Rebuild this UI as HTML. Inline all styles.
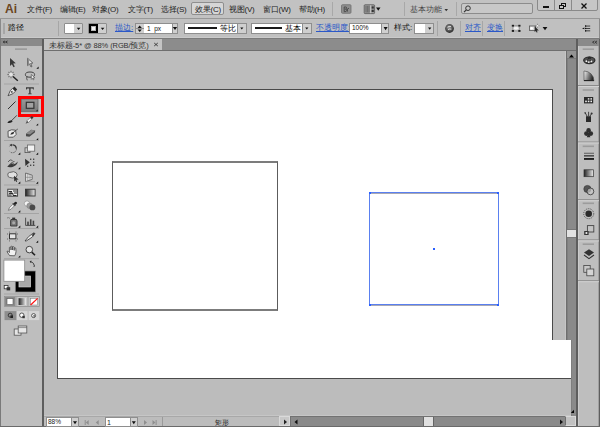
<!DOCTYPE html>
<html><head><meta charset="utf-8">
<style>
*{margin:0;padding:0;box-sizing:border-box}
html,body{width:600px;height:427px;overflow:hidden;background:#bcbcbc;font-family:"Liberation Sans",sans-serif;font-size:8px;color:#222}
.a{position:absolute}
.t{position:absolute;white-space:nowrap;line-height:1}
</style></head><body>
<!-- menu bar -->
<div class="a" style="left:0;top:0;width:600px;height:18px;background:#c2c2c2"></div>
<div class="a" style="left:0;top:18px;width:600px;height:1px;background:#989898"></div>
<!-- control bar -->
<div class="a" style="left:0;top:19px;width:600px;height:19px;background:#c0c0c0"></div>
<div class="a" style="left:0;top:37px;width:600px;height:1px;background:#cacaca"></div>
<div class="a" style="left:0;top:38px;width:600px;height:1px;background:#7a7a7a"></div>
<!-- MENU -->
<div class="t" style="left:5px;top:3px;font-size:12px;font-weight:bold;color:#6a4522">Ai</div>
<div class="t" style="left:27px;top:6px;letter-spacing:-0.25px">文件(F)</div>
<div class="t" style="left:60px;top:6px;letter-spacing:-0.25px">编辑(E)</div>
<div class="t" style="left:92px;top:6px;letter-spacing:-0.25px">对象(O)</div>
<div class="t" style="left:128px;top:6px;letter-spacing:-0.25px">文字(T)</div>
<div class="t" style="left:161px;top:6px;letter-spacing:-0.25px">选择(S)</div>
<div class="a" style="left:191px;top:2px;width:33px;height:13px;background:#d6d6d6;border:1px solid #8e8e8e;border-radius:2px"></div>
<div class="t" style="left:195px;top:6px;letter-spacing:-0.25px">效果(C)</div>
<div class="t" style="left:229px;top:6px;letter-spacing:-0.25px">视图(V)</div>
<div class="t" style="left:263px;top:6px;letter-spacing:-0.25px">窗口(W)</div>
<div class="t" style="left:299px;top:6px;letter-spacing:-0.25px">帮助(H)</div>
<div class="a" style="left:332px;top:2px;width:1px;height:14px;background:#a8a8a8"></div>
<svg class="a" style="left:336px;top:0" width="46" height="18" viewBox="336 0 46 18">
<rect x="341.5" y="4.7" width="9.5" height="8.6" rx="1" fill="#8e8e8e" stroke="#6e6e6e" stroke-width="0.8"/>
<path d="M344.2 11.6 V7 H345.6 Q346.8 7 346.6 8.2 Q346.4 9 345.4 9.1 Q346.8 9.3 346.7 10.5 Q346.5 11.6 345.2 11.6 Z M347.4 11.6 V9 Q348 8.3 349 8.4" fill="none" stroke="#4a4a4a" stroke-width="1"/>
<rect x="364.2" y="4.8" width="10.4" height="8.8" rx="0.8" fill="#9a9a9a" stroke="#555" stroke-width="0.8"/>
<rect x="365.4" y="6" width="4.2" height="6.4" fill="#6e6e6e"/>
<path d="M366.4 6V12.4M368.4 6V12.4" stroke="#8a8a8a" stroke-width="0.6"/>
<rect x="370.4" y="5.2" width="0.8" height="8" fill="#dadada"/>
<rect x="371.6" y="6.4" width="2.2" height="2.2" fill="#333"/>
<rect x="371.6" y="9.8" width="2.2" height="2.2" fill="#333"/>
</svg>
<svg class="a" style="left:0;top:0;overflow:visible" width="1" height="1"><path d="M376 7.5H380.5L378.25 10.8Z" fill="#111"/></svg>
<div class="a" style="left:404px;top:2px;width:1px;height:14px;background:#a8a8a8"></div>
<div class="t" style="left:410px;top:6px;color:#444">基本功能</div>
<svg class="a" style="left:0;top:0;overflow:visible" width="1" height="1"><path d="M444.5 9H448L446.25 11.2Z" fill="#333"/></svg>
<div class="a" style="left:456px;top:2px;width:1px;height:14px;background:#a8a8a8"></div>
<div class="a" style="left:461px;top:3px;width:72px;height:11px;background:#c8c8c8;border:1px solid #8c8c8c;border-radius:2px"></div>
<svg class="a" style="left:463px;top:5px" width="8" height="8"><circle cx="5" cy="3.2" r="2.3" fill="none" stroke="#333" stroke-width="1"/><line x1="3.3" y1="4.8" x2="1" y2="7.2" stroke="#333" stroke-width="1.2"/></svg>
<div class="a" style="left:537px;top:-2px;width:61px;height:13px;background:#c6c6c6;border:1px solid #8a8a8a;border-radius:2px"></div>
<div class="a" style="left:554px;top:0;width:1px;height:11px;background:#8a8a8a"></div>
<div class="a" style="left:571px;top:0;width:1px;height:11px;background:#8a8a8a"></div>
<div class="a" style="left:543px;top:6px;width:6px;height:2px;background:#111"></div>
<div class="a" style="left:561px;top:3px;width:5px;height:4px;border:1px solid #111"></div>
<div class="a" style="left:559px;top:5px;width:5px;height:4px;border:1px solid #111;background:#c6c6c6"></div>
<svg class="a" style="left:580px;top:2px" width="8" height="8"><path d="M1.5 1.5L6.5 6.5M6.5 1.5L1.5 6.5" stroke="#111" stroke-width="1.3"/></svg>
<!-- CONTROL -->
<div class="a" style="left:0;top:19px;width:1px;height:19px;background:#8a8a8a"></div>
<div class="a" style="left:3px;top:23px;width:2px;height:11px;background:#a6a6a6"></div>
<div class="t" style="left:8px;top:24px;font-size:7.5px;color:#111">路径</div>
<div class="a" style="left:58px;top:21px;width:1px;height:15px;background:#a6a6a6"></div>
<div class="a" style="left:64px;top:23px;width:19px;height:11px;background:#cfcfcf;border:1px solid #8e8e8e;border-radius:1px"></div>
<div class="a" style="left:65px;top:24px;width:9px;height:9px;background:#fff"></div>
<svg class="a" style="left:0;top:0;overflow:visible" width="1" height="1"><path d="M76.8 27.8H80.4L78.6 29.9Z" fill="#111"/></svg>
<div class="a" style="left:88px;top:23px;width:19px;height:11px;background:#cfcfcf;border:1px solid #8e8e8e;border-radius:1px"></div>
<div class="a" style="left:89px;top:24px;width:9px;height:9px;background:#b4b4b4;border:2px solid #000"></div>
<div class="a" style="left:92px;top:27px;width:3px;height:3px;background:#f4f4f4"></div>
<svg class="a" style="left:0;top:0;overflow:visible" width="1" height="1"><path d="M100.8 27.8H104.4L102.6 29.9Z" fill="#111"/></svg>
<div class="t" style="left:115px;top:24px;color:#2a58c8;text-decoration:underline">描边:</div>
<div class="a" style="left:135px;top:23px;width:43px;height:11px;background:#fff;border:1px solid #8e8e8e"></div>
<div class="a" style="left:136px;top:24px;width:8px;height:9px;background:#cfcfcf"></div>
<div class="a" style="left:136px;top:28px;width:8px;height:1px;background:#8e8e8e"></div>
<svg class="a" style="left:0;top:0;overflow:visible" width="1" height="1"><path d="M137.6 27.9H141.8L139.7 25.6Z" fill="#111"/></svg>
<svg class="a" style="left:0;top:0;overflow:visible" width="1" height="1"><path d="M137.6 29.6H141.8L139.7 31.9Z" fill="#111"/></svg>
<div class="t" style="left:147px;top:25.5px;font-size:6.5px;color:#111">1&nbsp;&nbsp;px</div>
<div class="a" style="left:172px;top:24px;width:5px;height:9px;background:#cfcfcf;border-left:1px solid #8e8e8e"></div>
<svg class="a" style="left:0;top:0;overflow:visible" width="1" height="1"><path d="M172.8 27H177.2L175.0 30Z" fill="#111"/></svg>
<div class="a" style="left:184px;top:23px;width:63px;height:11px;background:#fff;border:1px solid #8e8e8e"></div>
<div class="a" style="left:188px;top:27px;width:29px;height:2px;background:#1a1a1a"></div>
<div class="t" style="left:220px;top:24.5px;font-size:7.5px;color:#000">等比</div>
<div class="a" style="left:237px;top:24px;width:9px;height:9px;background:#cfcfcf;border-left:1px solid #8e8e8e"></div>
<svg class="a" style="left:0;top:0;overflow:visible" width="1" height="1"><path d="M240.2 27.6H243.4L241.8 29.6Z" fill="#111"/></svg>
<div class="a" style="left:251px;top:23px;width:61px;height:11px;background:#fff;border:1px solid #8e8e8e"></div>
<div class="a" style="left:255px;top:27px;width:27px;height:2px;background:#1a1a1a"></div>
<div class="t" style="left:285px;top:24.5px;font-size:7.5px;color:#000">基本</div>
<div class="a" style="left:302px;top:24px;width:9px;height:9px;background:#cfcfcf;border-left:1px solid #8e8e8e"></div>
<svg class="a" style="left:0;top:0;overflow:visible" width="1" height="1"><path d="M305.2 27.6H308.4L306.79999999999995 29.6Z" fill="#111"/></svg>
<div class="t" style="left:316px;top:24px;color:#2a58c8;text-decoration:underline">不透明度:</div>
<div class="a" style="left:349px;top:23px;width:40px;height:11px;background:#fff;border:1px solid #8e8e8e"></div>
<div class="t" style="left:352px;top:25px;font-size:6.5px;color:#111">100%</div>
<div class="a" style="left:381px;top:24px;width:7px;height:9px;background:#cfcfcf;border-left:1px solid #8e8e8e"></div>
<svg class="a" style="left:0;top:0;overflow:visible" width="1" height="1"><path d="M383.6 27H387.6L385.6 30.3Z" fill="#111"/></svg>
<div class="t" style="left:394px;top:24px;color:#111">样式:</div>
<div class="a" style="left:414px;top:23px;width:20px;height:11px;background:#cfcfcf;border:1px solid #8e8e8e"></div>
<div class="a" style="left:415px;top:24px;width:10px;height:9px;background:#fff"></div>
<svg class="a" style="left:0;top:0;overflow:visible" width="1" height="1"><path d="M428 27.6H431.4L429.7 29.8Z" fill="#111"/></svg>
<div class="a" style="left:437px;top:21px;width:1px;height:15px;background:#a6a6a6"></div>
<svg class="a" style="left:445px;top:24px" width="9" height="9"><defs><radialGradient id="glb" cx="0.45" cy="0.4" r="0.6"><stop offset="0" stop-color="#9a9a9a"/><stop offset="1" stop-color="#2a2a2a"/></radialGradient></defs><circle cx="4.5" cy="4.5" r="4.4" fill="url(#glb)"/><path d="M2.5 3.2 Q4 2 6 2.6 M3 5.6 Q4.6 4.6 6.4 5.2" stroke="#e6e6e6" stroke-width="0.9" fill="none"/></svg>
<div class="a" style="left:460px;top:21px;width:1px;height:15px;background:#a6a6a6"></div>
<div class="t" style="left:465px;top:24px;color:#2a58c8;text-decoration:underline">对齐</div>
<div class="a" style="left:482px;top:21px;width:1px;height:15px;background:#a6a6a6"></div>
<div class="t" style="left:487px;top:24px;color:#2a58c8;text-decoration:underline">变换</div>
<div class="a" style="left:504px;top:21px;width:1px;height:15px;background:#a6a6a6"></div>
<svg class="a" style="left:505px;top:19px" width="40" height="18" viewBox="505 19 40 18">
<path d="M512.8 25.6H519.4M512.8 31H519.4M512.8 25.6V31M519.4 25.6V31" stroke="#8a8a8a" stroke-width="0.7"/>
<ellipse cx="516.1" cy="28.3" rx="2.6" ry="1.4" fill="#f2f2f2"/>
<g fill="#1e1e1e"><rect x="511.8" y="24.8" width="2.2" height="1.8"/><rect x="518.3" y="24.8" width="2.2" height="1.8"/><rect x="511.8" y="30" width="2.2" height="1.9"/><rect x="518.3" y="30" width="2.2" height="1.9"/></g>
<rect x="529.4" y="26" width="6" height="4.4" fill="#dcdcdc" stroke="#555" stroke-width="0.8"/>
<circle cx="531.6" cy="28.2" r="1.2" fill="#fff"/>
<path d="M534.6 26.2 L538.8 30.4 L536.8 30.5 L537.6 32.2 L536.6 32.6 L535.8 30.9 L534.6 32 Z" fill="#2a2a2a"/>
<path d="M537.5 23.8V27.6M535.6 25.7H539.4" stroke="#666" stroke-width="0.8"/>
<circle cx="537.5" cy="25.7" r="1" fill="#f4f4f4"/>
</svg>
<svg class="a" style="left:0;top:0;overflow:visible" width="1" height="1"><path d="M542.6 27H547.4L545.0 30.3Z" fill="#111"/></svg>
<svg class="a" style="left:580px;top:24px" width="12" height="9" viewBox="580 24 12 9"><path d="M584.4 27.6 L582 28.4 L584.4 29.2Z" fill="#111"/><g fill="#333"><rect x="585" y="25.6" width="5.2" height="0.9"/><rect x="585" y="28" width="5.2" height="0.9"/><rect x="585" y="30.4" width="5.2" height="0.9"/></g><g fill="#111"><rect x="585" y="25.4" width="1.2" height="1.3"/><rect x="585" y="27.8" width="1.2" height="1.3"/><rect x="585" y="30.2" width="1.2" height="1.3"/></g></svg>
<div class="a" style="left:599px;top:19px;width:1px;height:19px;background:#8a8a8a"></div>
<!-- left panel -->
<div class="a" style="left:0;top:39px;width:42px;height:388px;background:#bebebe"></div>
<div class="a" style="left:0;top:39px;width:42px;height:7px;background:#8a8a8a"></div>
<div class="a" style="left:0;top:39px;width:1px;height:388px;background:#7a7a7a"></div>
<div class="a" style="left:42px;top:39px;width:2px;height:388px;background:#5e5e5e"></div>
<svg class="a" style="left:0;top:0" width="44" height="427" viewBox="0 0 44 427">
<defs>
<linearGradient id="gH" x1="0" x2="1" y1="0" y2="0"><stop offset="0" stop-color="#222"/><stop offset="1" stop-color="#eee"/></linearGradient>
<linearGradient id="gV" x1="0" x2="0" y1="0" y2="1"><stop offset="0" stop-color="#999"/><stop offset="1" stop-color="#7a7a7a"/></linearGradient>
</defs>
<!-- header << -->
<path d="M5 41 L3 42 L5 43 M7.5 41 L5.5 42 L7.5 43" stroke="#333" stroke-width="0.9" fill="none"/>
<!-- grip -->
<rect x="15" y="48.3" width="12" height="1.7" fill="#9c9c9c"/>
<!-- selection -->
<path d="M10 58 L15.8 63.3 L13.2 63.6 L14.8 66.6 L13.5 67.2 L11.9 64.2 L10 66 Z" fill="#3a3a3a"/>
<!-- direct selection -->
<path d="M27.6 58.3 L32.8 63 L30.6 63.3 L32 66.4 L31 67 L29.6 63.9 L27.6 65.6 Z" fill="#eee" stroke="#4a4a4a" stroke-width="0.8"/><path d="M28 59.3 L29.2 60.4 L29.2 64.2 L28 65 Z" fill="#8a8a8a"/>
<path d="M38.6 66.6 L38.6 68.8 L36.4 68.8 Z" fill="#111"/>
<!-- magic wand -->
<g stroke="#7a7a7a" stroke-width="1.2"><line x1="11" y1="70.8" x2="11" y2="78.2"/><line x1="7.3" y1="74.5" x2="14.7" y2="74.5"/><line x1="8.4" y1="71.9" x2="13.6" y2="77.1"/><line x1="13.6" y1="71.9" x2="8.4" y2="77.1"/></g>
<circle cx="11" cy="74.5" r="2" fill="#e4e4e4"/>
<line x1="13" y1="76.5" x2="17.8" y2="80.8" stroke="#222" stroke-width="1.5"/>
<!-- lasso -->
<ellipse cx="30" cy="74.6" rx="4.6" ry="2.6" fill="none" stroke="#444" stroke-width="1"/>
<path d="M27 76.5 Q26.2 78.5 27.3 80.3" fill="none" stroke="#444" stroke-width="0.9"/>
<path d="M31.3 74.5 L35 77.8 L33.2 77.9 L34 79.5 L33.2 79.9 L32.4 78.3 L31.3 79.4 Z" fill="#eee" stroke="#444" stroke-width="0.6"/>
<!-- sep -->
<rect x="4" y="83.5" width="35" height="1" fill="#a4a4a4"/>
<!-- pen -->
<g transform="rotate(45 11.9 91.9)">
<rect x="9.9" y="86.4" width="4" height="2.6" fill="#2a2a2a"/>
<path d="M9.9 89 L13.9 89 L14 92 L11.9 97.4 L9.8 92 Z" fill="#e8e8e8" stroke="#444" stroke-width="0.8"/>
<circle cx="11.9" cy="92" r="0.9" fill="#444"/>
</g>
<!-- type -->
<path d="M26 87.3 H33.8 V89.6 H33.1 L32.6 88.6 H30.6 V93.4 L31.7 93.6 V94.3 H28.1 V93.6 L29.2 93.4 V88.6 H27.2 L26.7 89.6 H26 Z" fill="#3a3a3a"/>
<!-- line -->
<line x1="8" y1="109" x2="15.5" y2="101.5" stroke="#333" stroke-width="1"/>
<!-- rect button -->
<rect x="21.5" y="99.2" width="16.5" height="12.5" fill="url(#gV)" stroke="#6a6a6a" stroke-width="0.8"/>
<rect x="26.3" y="102.3" width="7.6" height="6" fill="#a2a2a2" stroke="#333" stroke-width="1.2"/>
<path d="M37.6 109.6 L37.6 111.3 L35.9 111.3 Z" fill="#111"/>
<rect x="19.5" y="97.5" width="23" height="18" fill="none" stroke="#ff0000" stroke-width="3"/>
<!-- brush -->
<line x1="16.9" y1="115.3" x2="11.6" y2="120.6" stroke="#444" stroke-width="1"/>
<path d="M7.3 122.8 Q8.5 120 11.8 120.2 L12.6 121.2 Q11.5 123.6 7.3 122.8 Z" fill="#222"/>
<!-- pencil -->
<g transform="rotate(45 29.1 120.2)">
<rect x="28" y="115.2" width="2.3" height="2.5" fill="#333"/>
<rect x="28" y="117.7" width="2.3" height="4.5" fill="#f0f0f0" stroke="#555" stroke-width="0.5"/>
<path d="M28 122.2 L30.3 122.2 L29.15 125.2 Z" fill="#555"/>
</g>
<path d="M38.2 123.4 L38.2 125.6 L36 125.6 Z" fill="#111"/>
<!-- blob brush -->
<path d="M8 131.2 L11.6 129.8 L15.5 130.2 L16.2 134.4 L13.4 137.2 L8.2 137.2 Z" fill="#ececec" stroke="#4a4a4a" stroke-width="0.9"/>
<path d="M10.2 134.4 Q11.6 131.6 14.2 132 Q13.8 135.2 10.2 134.4 Z" fill="#2a2a2a"/>
<line x1="13.5" y1="132.2" x2="17.8" y2="129" stroke="#444" stroke-width="0.8"/>
<!-- eraser -->
<path d="M26 133.8 L31.2 129.8 L35.2 130.6 L34.8 132.6 L29.4 136.7 L26 136.3 Z" fill="#4a4a4a"/>
<path d="M26 133.8 L31.2 129.8 L35.2 130.6 L30 134.4 Z" fill="#8a8a8a"/>
<path d="M38.2 138 L38.2 140.2 L36 140.2 Z" fill="#111"/>
<!-- sep -->
<rect x="4" y="140" width="35" height="1" fill="#a4a4a4"/>
<!-- rotate -->
<path d="M9.6 146.3 A3.9 3.9 0 1 1 9.8 151.6" fill="none" stroke="#555" stroke-width="1" stroke-dasharray="1.2 1"/>
<path d="M12.8 144.8 A3.9 3.9 0 0 1 16.2 148.6" fill="none" stroke="#333" stroke-width="1.2"/>
<path d="M9.4 145 L11.9 143.7 L11.8 146.5 Z" fill="#333"/>
<path d="M20.3 152.5 L20.3 154.7 L18.1 154.7 Z" fill="#111"/>
<!-- scale -->
<rect x="25" y="147.8" width="5" height="4.8" fill="#c8c8c8" stroke="#555" stroke-width="0.8"/>
<rect x="27.5" y="145" width="7.2" height="6.2" fill="#f2f2f2" stroke="#666" stroke-width="0.8"/>
<path d="M38.2 152.5 L38.2 154.7 L36 154.7 Z" fill="#111"/>
<!-- warp / width -->
<path d="M7.2 166.8 Q10 163 12.5 164 Q15 165 17.8 161.6 Q17 165.8 12.5 166.9 Q9.5 167.4 7.2 166.8 Z" fill="#3a3a3a"/><path d="M8.5 165.5 Q11 161.5 14 163.5" fill="none" stroke="#666" stroke-width="0.9"/>
<path d="M8 162 Q10 158.5 12.5 160.5" fill="none" stroke="#555" stroke-width="0.9"/>
<path d="M11 164 Q12.5 161 14.5 161.5" fill="none" stroke="#555" stroke-width="0.9"/>
<path d="M20.3 167 L20.3 169.2 L18.1 169.2 Z" fill="#111"/>
<!-- free transform -->
<path d="M25 158.7 L29.8 162.2 L25.4 166 Z" fill="#333"/>
<g fill="#3a3a3a"><rect x="30" y="158.6" width="1.3" height="1.3"/><rect x="33" y="158.6" width="1.3" height="1.3"/><rect x="33" y="161.6" width="1.3" height="1.3"/><rect x="33" y="164.6" width="1.3" height="1.3"/><rect x="30" y="164.6" width="1.3" height="1.3"/><rect x="27" y="165.6" width="1.3" height="1.3"/></g>
<!-- shape builder -->
<path d="M8 175.6 Q7 172.4 11 172.2 Q13.6 170.8 16.2 172.8 Q18.4 174.8 16 177.4 Q12 178.6 9.6 177.4 Q7.8 177 8 175.6 Z" fill="#e0e0e0" stroke="#555" stroke-width="0.9"/>
<path d="M14 175.8 L18.6 179.6 L16.4 179.8 L17.2 181.6 L16.2 182 L15.4 180.3 L14.2 181.5 Z" fill="#333"/>
<path d="M20.3 181.6 L20.3 183.8 L18.1 183.8 Z" fill="#111"/>
<!-- perspective -->
<path d="M25.6 173 L32.2 175.2 L32.2 179.4 L25.6 181.6 Z" fill="#e8e8e8" stroke="#555" stroke-width="0.8"/>
<path d="M27.8 173.8 V180.9 M30 174.5 V180.2 M25.6 177.3 H32.2" stroke="#777" stroke-width="0.6"/>
<line x1="25.6" y1="181.6" x2="35" y2="181.6" stroke="#999" stroke-width="0.7"/>
<path d="M38.2 181.6 L38.2 183.8 L36 183.8 Z" fill="#111"/>
<!-- sep -->
<rect x="4" y="184.5" width="35" height="1" fill="#a4a4a4"/>
<!-- mesh -->
<rect x="7.8" y="189.2" width="9.8" height="7" fill="#f0f0f0" stroke="#3a3a3a" stroke-width="0.9"/>
<path d="M8.5 191.5 H12 M13 191 H17 M9 193.5 Q12 192 13.5 194.5 M14 193 H17 M8.5 195 H11.5 M13 195.5 H16.5" stroke="#2a2a2a" stroke-width="1.1"/>
<!-- gradient -->
<rect x="25.5" y="189.2" width="9.6" height="6.8" fill="url(#gH)" stroke="#333" stroke-width="0.9"/>
<!-- eyedropper -->
<g transform="rotate(45 12.4 206.3)">
<rect x="11.2" y="200.4" width="2.4" height="3.2" rx="1" fill="#222"/>
<rect x="10.6" y="203.4" width="3.6" height="1.2" fill="#222"/>
<path d="M11.3 204.6 H13.5 V209.4 L12.4 212 L11.3 209.4 Z" fill="#f0f0f0" stroke="#555" stroke-width="0.6"/>
</g>
<path d="M20.3 210.2 L20.3 212.4 L18.1 212.4 Z" fill="#111"/>
<!-- blend -->
<circle cx="27" cy="203.6" r="2.7" fill="#f4f4f4" stroke="#888" stroke-width="0.6"/>
<circle cx="29.6" cy="205.8" r="2.8" fill="#9a9a9a" stroke="#777" stroke-width="0.5"/>
<circle cx="32.4" cy="207.4" r="2.9" fill="#4a4a4a"/>
<!-- sep -->
<rect x="4" y="213" width="35" height="1" fill="#a4a4a4"/>
<!-- symbol sprayer -->
<path d="M11 219.5 H16.4 L17 221 V226 H10.6 V221 Z" fill="#777" stroke="#333" stroke-width="0.9"/>
<rect x="12.2" y="217.6" width="3" height="1.9" fill="#333"/>
<circle cx="13.7" cy="222.8" r="1.5" fill="#aaa"/>
<path d="M7 218 Q8.5 217 10 218.4" fill="none" stroke="#777" stroke-width="0.9"/>
<path d="M20.3 225.6 L20.3 227.8 L18.1 227.8 Z" fill="#111"/>
<!-- graph -->
<path d="M25.6 217.7 V225.4 H35.3" fill="none" stroke="#444" stroke-width="0.9"/>
<rect x="27.2" y="221.6" width="1.6" height="3.8" fill="#444"/>
<rect x="29.9" y="219.3" width="1.6" height="6.1" fill="#444"/>
<rect x="32.6" y="220.7" width="1.6" height="4.7" fill="#444"/>
<path d="M38.2 225.6 L38.2 227.8 L36 227.8 Z" fill="#111"/>
<!-- sep -->
<rect x="4" y="228" width="35" height="1" fill="#a4a4a4"/>
<!-- artboard -->
<rect x="9.5" y="233.8" width="6.4" height="5" fill="#e6e6e6" stroke="#333" stroke-width="1"/>
<g fill="#666"><rect x="7" y="233.5" width="1" height="1"/><rect x="7" y="238.5" width="1" height="1"/><rect x="17" y="233.5" width="1" height="1"/><rect x="17" y="238.5" width="1" height="1"/><rect x="9" y="231.6" width="1" height="1"/><rect x="15.5" y="231.6" width="1" height="1"/><rect x="9" y="240.4" width="1" height="1"/><rect x="15.5" y="240.4" width="1" height="1"/></g>
<!-- slice -->
<path d="M35 233.4 L32.4 237 L26.5 240.8 L25 241 L28.6 236.6 L33.4 233 Z" fill="#f0f0f0" stroke="#333" stroke-width="0.8"/>
<path d="M35 233.4 L33.4 233 L31.6 235.4 L33 236 Z" fill="#333"/>
<path d="M38.2 240.6 L38.2 242.8 L36 242.8 Z" fill="#111"/>
<!-- hand -->
<path d="M9.6 255.6 L7.2 252 Q6.6 250.8 8 251.2 L9.4 252.6 L9.4 247.4 Q10.2 246.6 11 247.4 L11 250 L11 246.6 Q11.8 245.8 12.6 246.6 L12.6 250 L12.6 247 Q13.4 246.2 14.2 247 L14.2 250.4 L14.2 248.2 Q15 247.4 15.8 248.2 L16 251.6 Q15.8 254.4 14.6 255.8 Z" fill="#f2f2f2" stroke="#444" stroke-width="0.8"/>
<path d="M20.3 255.4 L20.3 257.6 L18.1 257.6 Z" fill="#111"/>
<!-- zoom -->
<circle cx="29.3" cy="249.6" r="3.3" fill="#e4e4e4" stroke="#444" stroke-width="1"/>
<line x1="31.8" y1="252.1" x2="35" y2="255.3" stroke="#222" stroke-width="1.6"/>
<!-- sep -->
<rect x="4" y="258.2" width="35" height="1" fill="#a4a4a4"/>
<!-- fill/stroke -->
<rect x="15.3" y="271" width="20.2" height="21" fill="#000" stroke="#8a8a8a" stroke-width="0.7"/>
<rect x="19" y="276.1" width="11.4" height="10.8" fill="#a8a8a8" stroke="#d0d0d0" stroke-width="0.8"/>
<rect x="3.9" y="260.1" width="20.8" height="21.2" fill="#fff" stroke="#8a8a8a" stroke-width="0.8"/>
<path d="M30 262 Q33.5 261.6 34.2 265.6" fill="none" stroke="#333" stroke-width="0.9"/>
<path d="M29.6 261.2 L31.4 260.6 L31.2 263 Z M35 265 L33 266.4 L34.8 266.8 Z" fill="#333"/>
<rect x="4.2" y="285.4" width="3.8" height="3.4" fill="#fff" stroke="#333" stroke-width="0.8"/>
<rect x="6.6" y="287.2" width="3.6" height="3.2" fill="#333"/>
<!-- sep -->
<rect x="4" y="293.5" width="35" height="1" fill="#a4a4a4"/>
<!-- color mode row -->
<rect x="4.3" y="296.3" width="35" height="10.3" fill="#b0b0b0" stroke="#8a8a8a" stroke-width="0.6"/>
<rect x="5" y="297" width="10.2" height="9" fill="#8a8a8a"/>
<rect x="7" y="298.6" width="6" height="6" fill="#fff" stroke="#555" stroke-width="0.6"/>
<rect x="17.4" y="297" width="9.6" height="9" fill="#c8c8c8"/>
<rect x="18.6" y="298.2" width="7.4" height="6.8" fill="url(#gH)"/>
<rect x="29.2" y="297" width="9.6" height="9" fill="#c8c8c8"/>
<rect x="30.6" y="298.4" width="7" height="6.6" fill="#fff" stroke="#777" stroke-width="0.5"/>
<line x1="30.6" y1="305" x2="37.6" y2="298.4" stroke="#ff1010" stroke-width="1.2"/>
<!-- draw mode row -->
<rect x="4.5" y="311.1" width="11.8" height="9" fill="#8e8e8e"/>
<rect x="16.9" y="311.1" width="10.6" height="9" fill="#d6d6d6"/>
<rect x="28.7" y="311.1" width="10.6" height="9" fill="#d6d6d6"/>
<circle cx="10.2" cy="315.2" r="2" fill="none" stroke="#222" stroke-width="0.8"/><rect x="10.4" y="315.4" width="2.6" height="2.6" fill="#222"/>
<circle cx="21.8" cy="315.2" r="2.2" fill="#fff" stroke="#333" stroke-width="0.8"/><rect x="22.4" y="315.8" width="2.4" height="2.4" fill="#333"/>
<circle cx="33.6" cy="315.6" r="2" fill="#fff" stroke="#333" stroke-width="0.8"/><rect x="33.4" y="315.2" width="1.4" height="1.4" fill="#333"/>
<!-- screen mode -->
<rect x="14.2" y="329" width="6.8" height="6.2" fill="#e6e6e6" stroke="#555" stroke-width="0.8"/>
<rect x="18.2" y="326" width="8.6" height="7" fill="#e6e6e6" stroke="#555" stroke-width="0.8"/>
<line x1="18.2" y1="327.6" x2="26.8" y2="327.6" stroke="#555" stroke-width="0.6"/>
</svg>

<!-- tab bar -->
<div class="a" style="left:44px;top:39px;width:532px;height:11px;background:#8c8c8c"></div>
<div class="a" style="left:44px;top:39px;width:118px;height:11px;background:#c4c4c4"></div>
<div class="a" style="left:44px;top:50px;width:532px;height:1px;background:#6e6e6e"></div>
<div class="t" style="left:49px;top:41.8px;font-size:7.5px;letter-spacing:-0.1px;color:#333">未标题-5* @ 88% (RGB/预览)</div>
<svg class="a" style="left:153px;top:42px" width="6" height="5"><path d="M1.2 1L4.8 4M4.8 1L1.2 4" stroke="#333" stroke-width="0.9"/></svg>

<!-- canvas -->
<div class="a" style="left:44px;top:51px;width:522px;height:365px;background:#bcbcbc"></div>
<!-- artboard -->
<div class="a" style="left:57px;top:89px;width:496px;height:290px;background:#fff;border:1px solid #4a4a4a"></div>
<div class="a" style="left:552px;top:340px;width:19px;height:38px;background:#fff"></div>
<div class="a" style="left:552px;top:378px;width:19px;height:1px;background:#4a4a4a"></div>
<!-- rect 1 -->
<div class="a" style="left:112px;top:161px;width:166px;height:150px;border-left:1px solid #5c5c5c;border-right:1px solid #5c5c5c;border-top:2px solid #7c7c7c;border-bottom:2px solid #7c7c7c"></div>
<!-- rect 2 -->
<div class="a" style="left:369px;top:193px;width:130px;height:113px;border:1px solid #a8a8b4"></div>
<div class="a" style="left:369px;top:192px;width:130px;height:113px;border:1px solid #5a80f0"></div>
<div class="a" style="left:369px;top:192px;width:2px;height:2px;background:#2a60ff"></div>
<div class="a" style="left:497px;top:192px;width:2px;height:2px;background:#2a60ff"></div>
<div class="a" style="left:369px;top:304px;width:2px;height:2px;background:#2a60ff"></div>
<div class="a" style="left:497px;top:304px;width:2px;height:2px;background:#2a60ff"></div>
<div class="a" style="left:433px;top:248px;width:2px;height:2px;background:#2a60ff"></div>
<!-- v scrollbar -->
<div class="a" style="left:566px;top:51px;width:10px;height:289px;background:#8a8a8a;border-left:1px solid #6e6e6e"></div>
<div class="a" style="left:567px;top:51px;width:9px;height:8px;background:#949494;border-bottom:1px solid #7a7a7a"></div>
<div class="a" style="left:571px;top:340px;width:5px;height:76px;background:#8a8a8a"></div>
<div class="a" style="left:576px;top:39px;width:2px;height:388px;background:#5e5e5e"></div>
<div class="a" style="left:565px;top:51px;width:1px;height:289px;background:#c6c6c6"></div>
<div class="a" style="left:567px;top:59px;width:1px;height:281px;background:#7e7e7e"></div>
<div class="a" style="left:571px;top:340px;width:1px;height:76px;background:#7e7e7e"></div>
<div class="a" style="left:567px;top:229px;width:9px;height:9px;background:#e2e2e2;border-top:1px solid #777;border-bottom:1px solid #777"></div>
<!-- right panel -->
<div class="a" style="left:578px;top:39px;width:22px;height:388px;background:#bebebe"></div>
<div class="a" style="left:578px;top:39px;width:22px;height:7px;background:#8a8a8a"></div>
<div class="a" style="left:578px;top:46px;width:1px;height:381px;background:#cccccc"></div>
<div class="a" style="left:598px;top:46px;width:1px;height:381px;background:#a0a0a0"></div>
<div class="a" style="left:599px;top:39px;width:1px;height:388px;background:#5e5e5e"></div>
<!-- status bar -->
<div class="a" style="left:44px;top:415px;width:527px;height:1px;background:#c6c6c6"></div>
<div class="a" style="left:44px;top:416px;width:532px;height:1px;background:#a8a8a8"></div>
<div class="a" style="left:44px;top:417px;width:247px;height:10px;background:#bcbcbc"></div>
<div class="a" style="left:291px;top:417px;width:275px;height:9px;background:#8a8a8a"></div>
<div class="a" style="left:290px;top:416px;width:276px;height:1px;background:#727272"></div>
<div class="a" style="left:290px;top:416px;width:1px;height:10px;background:#727272"></div>
<div class="a" style="left:565px;top:416px;width:11px;height:10px;background:#c2c2c2;border:1px solid #d8d8d8;border-left:1px solid #6e6e6e"></div>
<div class="a" style="left:0;top:426px;width:600px;height:1px;background:#6a6a6a"></div>
<svg class="a" style="left:576px;top:0" width="24" height="427" viewBox="576 0 24 427">
<defs>
<linearGradient id="rg1" x1="0" x2="1" y1="0" y2="0.3"><stop offset="0" stop-color="#f6f6f6"/><stop offset="0.6" stop-color="#777"/><stop offset="1" stop-color="#2a2a2a"/></linearGradient>
<linearGradient id="rg2" x1="0" x2="1" y1="0" y2="0"><stop offset="0" stop-color="#222"/><stop offset="1" stop-color="#eee"/></linearGradient>
</defs>
<path d="M594.5 41 L592.5 42.2 L594.5 43.4 M597 41 L595 42.2 L597 43.4" stroke="#333" stroke-width="0.9" fill="none"/>
<g fill="#9c9c9c"><rect x="582.7" y="48.4" width="11.3" height="1.6"/><rect x="582.7" y="89.2" width="11.3" height="1.6"/><rect x="582.7" y="145.5" width="11.3" height="1.6"/><rect x="582.7" y="202.5" width="11.3" height="1.6"/><rect x="582.7" y="243.4" width="11.3" height="1.6"/></g>
<g fill="#8a8a8a"><rect x="578" y="85" width="21" height="1"/><rect x="578" y="141.5" width="21" height="1"/><rect x="578" y="199.2" width="21" height="1"/><rect x="578" y="239.4" width="21" height="1"/><rect x="578" y="280.2" width="21" height="1"/></g>
<g fill="#d2d2d2"><rect x="578" y="86" width="21" height="1"/><rect x="578" y="142.5" width="21" height="1"/><rect x="578" y="200.2" width="21" height="1"/><rect x="578" y="240.4" width="21" height="1"/><rect x="578" y="281.2" width="21" height="1"/></g>
<!-- palette -->
<ellipse cx="589.3" cy="60.3" rx="5.6" ry="3.3" fill="#505050" stroke="#2a2a2a" stroke-width="1.2"/>
<path d="M587.6 57.4 Q589.6 55.6 591.4 57.6 L590.6 59 Q589 58.6 588 59.2 Z" fill="#2a2a2a"/>
<g fill="#f0f0f0"><circle cx="586.4" cy="61.2" r="0.9"/><circle cx="588.8" cy="62.1" r="0.9"/><circle cx="591.4" cy="61.4" r="0.9"/></g>
<g fill="#333"><circle cx="587.6" cy="60" r="0.7"/><circle cx="590.2" cy="60.4" r="0.7"/></g>
<!-- color guide -->
<path d="M584 71 L584 80.8 L593.9 80.8 A9.9 9.8 0 0 0 584 71 Z" fill="url(#rg1)" stroke="#444" stroke-width="0.6"/><rect x="584" y="80" width="9.9" height="1" fill="#222"/>
<!-- swatches -->
<rect x="584" y="97" width="9.2" height="6.4" fill="#2a2a2a"/>
<g fill="#f0f0f0"><rect x="585.2" y="100.6" width="1.6" height="1.6"/><rect x="587.8" y="100.6" width="1.6" height="1.6"/><rect x="590.4" y="100.6" width="1.6" height="1.6"/><rect x="587.8" y="98.2" width="1.6" height="1.4"/><rect x="590.4" y="98.2" width="1.6" height="1.4"/></g>
<!-- brushes -->
<rect x="586" y="116.2" width="5" height="5.8" fill="#2a2a2a"/>
<path d="M587 116 L585 112.5 M588.6 116 L588.6 111.8 M590 116 L592 113" stroke="#333" stroke-width="0.9"/>
<circle cx="591.6" cy="113.6" r="1" fill="#333"/><circle cx="585.2" cy="113" r="0.8" fill="#333"/>
<!-- symbols club -->
<g fill="#2e2e2e"><circle cx="588.6" cy="130.4" r="2.3"/><circle cx="586.4" cy="133.6" r="2.3"/><circle cx="590.8" cy="133.6" r="2.3"/><path d="M588.1 133 L589.1 133 L590.4 137.3 L586.8 137.3 Z"/></g>
<!-- stroke -->
<rect x="584" y="152.8" width="10" height="0.8" fill="#444"/>
<rect x="584" y="155.2" width="10" height="1.3" fill="#333"/>
<rect x="584" y="158" width="10" height="1.9" fill="#1e1e1e"/>
<!-- gradient -->
<rect x="584" y="169.8" width="9.6" height="6.9" fill="url(#rg2)" stroke="#333" stroke-width="0.7"/>
<!-- transparency -->
<circle cx="587.4" cy="189" r="3.6" fill="#555" stroke="#333" stroke-width="0.6"/>
<circle cx="590.4" cy="191.4" r="3.4" fill="#c8c8c8" fill-opacity="0.7" stroke="#333" stroke-width="0.8"/>
<!-- appearance -->
<circle cx="588.7" cy="213.7" r="5" fill="none" stroke="#444" stroke-width="0.9" stroke-dasharray="1 1"/>
<circle cx="588.7" cy="213.7" r="3.3" fill="#2a2a2a"/>
<!-- graphic styles -->
<rect x="587.4" y="225.6" width="6.4" height="6.4" fill="#c4c4c4" stroke="#444" stroke-width="0.9"/>
<rect x="584.2" y="231" width="4.4" height="4" fill="#333"/>
<circle cx="586.4" cy="233" r="1.1" fill="#eee"/>
<!-- layers -->
<path d="M589 249.2 L594 252.6 L589 256 L584 252.6 Z" fill="#333"/>
<path d="M584 255 L589 258.6 L594 255" fill="none" stroke="#333" stroke-width="1.1"/>
<!-- artboards -->
<rect x="583.8" y="265.5" width="6.4" height="6.8" fill="#c8c8c8" stroke="#444" stroke-width="0.8"/>
<rect x="586.8" y="269" width="7" height="6.8" fill="#d4d4d4" stroke="#444" stroke-width="0.8"/>
</svg>
<!-- status details -->
<div class="a" style="left:46px;top:417px;width:33px;height:10px;background:#fff;border:1px solid #8e8e8e"></div>
<div class="t" style="left:48px;top:418.5px;font-size:6.5px;color:#222">88%</div>
<div class="a" style="left:71px;top:418px;width:7px;height:8px;background:#cfcfcf;border-left:1px solid #8e8e8e"></div>
<svg class="a" style="left:0;top:0;overflow:visible" width="1" height="1"><path d="M73 421.2H77L75.0 424.2Z" fill="#111"/></svg>
<svg class="a" style="left:84px;top:419px" width="76" height="7"><g fill="#8e8e8e"><rect x="0.7" y="1" width="1" height="5"/><path d="M4.7 1L1.8 3.5L4.7 6Z"/><path d="M14.7 1L11.8 3.5L14.7 6Z"/><path d="M60 1L63 3.5L60 6Z"/><path d="M68.5 1L71.4 3.5L68.5 6Z"/><rect x="71.6" y="1" width="1" height="5"/></g></svg>
<div class="a" style="left:105px;top:417px;width:33px;height:10px;background:#fff;border:1px solid #8e8e8e"></div>
<div class="t" style="left:107px;top:418.5px;font-size:7px;color:#222">1</div>
<div class="a" style="left:130px;top:418px;width:7px;height:8px;background:#cfcfcf;border-left:1px solid #8e8e8e"></div>
<svg class="a" style="left:0;top:0;overflow:visible" width="1" height="1"><path d="M131.8 421.2H135.8L133.8 424.2Z" fill="#111"/></svg>
<div class="a" style="left:162px;top:417px;width:1px;height:9px;background:#9a9a9a"></div>
<div class="t" style="left:215px;top:418.5px;font-size:7px;color:#222">矩形</div>
<div class="a" style="left:279px;top:416px;width:11px;height:10px;background:#c8c8c8;border:1px solid #dadada"></div>
<svg class="a" style="left:279px;top:417px" width="300" height="10"><path d="M5 2.5L8 5L5 7.5Z" fill="#222"/><path d="M18.5 2.5L15.5 5L18.5 7.5Z" fill="#111"/><path d="M281 2.5L284 5L281 7.5Z" fill="#111"/></svg>
<div class="a" style="left:423px;top:417px;width:11px;height:9px;background:#e0e0e0;border-left:1px solid #666;border-right:1px solid #666"></div>
<svg class="a" style="left:566px;top:51px" width="11" height="370"><path d="M3 6.5L5.5 3.5L8 6.5Z" fill="#000"/><path d="M8 358.8L8 362L4.8 362Z" fill="#000"/></svg>
</body></html>
